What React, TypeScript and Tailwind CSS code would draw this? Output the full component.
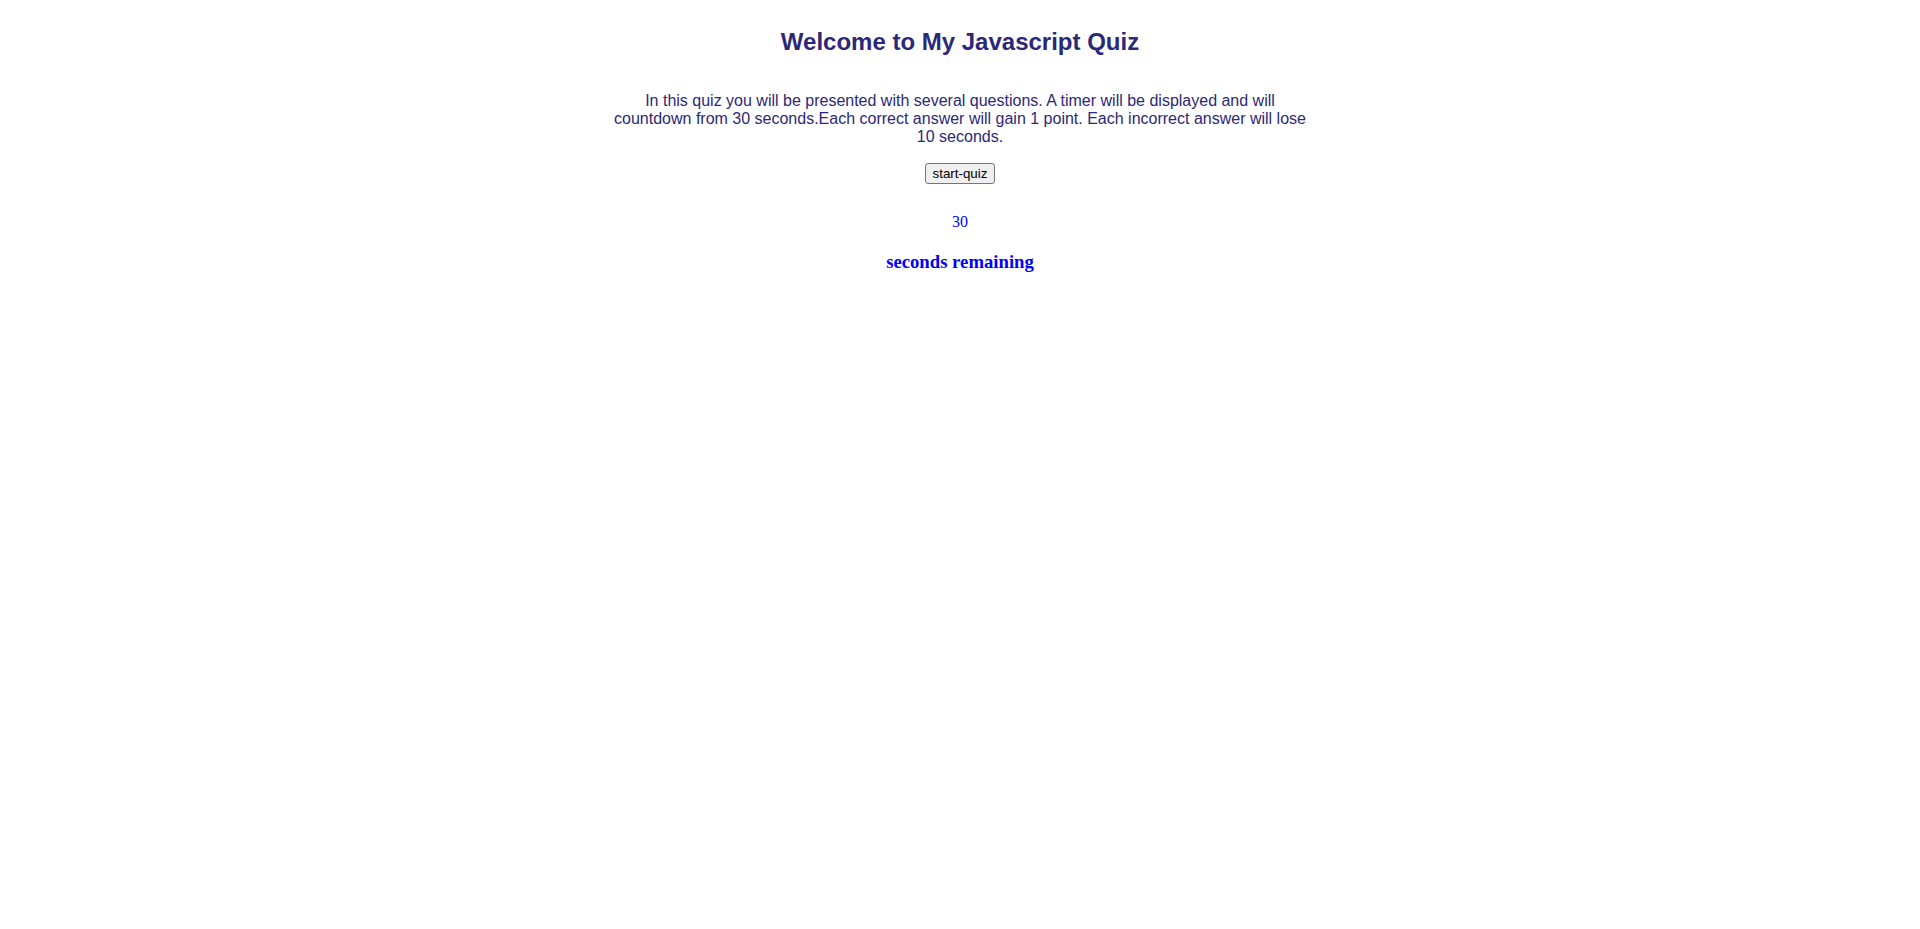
import React from "react";

const App: React.FC = () => {
  return (
    <div className="min-h-screen bg-white flex flex-col items-center pt-[28px] font-['Liberation_Sans',Arial,sans-serif]">
      {/* Title */}
      <h2 className="text-[24px] leading-[1.15] font-bold text-[#2c2878]">
        Welcome to My Javascript Quiz
      </h2>

      {/* Intro */}
      <p className="mt-[36px] w-[700px] text-center text-[16px] leading-[1.15] text-[#2c2878]">
        In this quiz you will be presented with several questions. A timer will be displayed and will countdown from 30 seconds.Each correct answer will gain 1 point. Each incorrect answer will lose 10 seconds.
      </p>

      {/* Start button */}
      <button
        type="button"
        className="mt-[16px] h-[21px] px-[7px] flex items-center justify-center border border-[#767676] rounded-[3px] bg-[#efefef] text-[13.33px] leading-none text-black"
      >
        start-quiz
      </button>

      {/* Timer */}
      <div className="mt-[29px] text-[16px] leading-[1.15] text-[#0000ff] font-['Liberation_Serif','Times_New_Roman',serif]">
        30
      </div>
      <h3 className="mt-[20px] text-[18.72px] leading-[1.15] font-bold text-[#0000ff] font-['Liberation_Serif','Times_New_Roman',serif]">
        seconds remaining
      </h3>
    </div>
  );
};

export default App;
